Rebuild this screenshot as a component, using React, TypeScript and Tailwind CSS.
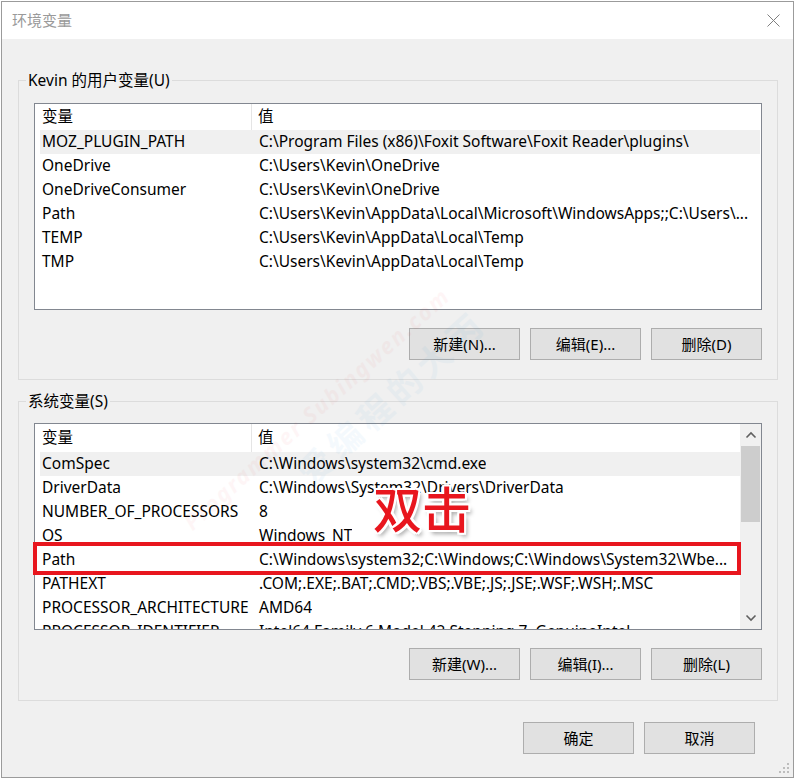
import React from "react";

const font = "font-['Noto_Sans','Noto_Sans_CJK_SC',sans-serif]";

const userVars = [
  { name: "MOZ_PLUGIN_PATH", value: "C:\\Program Files (x86)\\Foxit Software\\Foxit Reader\\plugins\\" },
  { name: "OneDrive", value: "C:\\Users\\Kevin\\OneDrive" },
  { name: "OneDriveConsumer", value: "C:\\Users\\Kevin\\OneDrive" },
  { name: "Path", value: "C:\\Users\\Kevin\\AppData\\Local\\Microsoft\\WindowsApps;;C:\\Users\\..." },
  { name: "TEMP", value: "C:\\Users\\Kevin\\AppData\\Local\\Temp" },
  { name: "TMP", value: "C:\\Users\\Kevin\\AppData\\Local\\Temp" },
];

const systemVars = [
  { name: "ComSpec", value: "C:\\Windows\\system32\\cmd.exe" },
  { name: "DriverData", value: "C:\\Windows\\System32\\Drivers\\DriverData" },
  { name: "NUMBER_OF_PROCESSORS", value: "8" },
  { name: "OS", value: "Windows_NT" },
  { name: "Path", value: "C:\\Windows\\system32;C:\\Windows;C:\\Windows\\System32\\Wbe..." },
  { name: "PATHEXT", value: ".COM;.EXE;.BAT;.CMD;.VBS;.VBE;.JS;.JSE;.WSF;.WSH;.MSC" },
  { name: "PROCESSOR_ARCHITECTURE", value: "AMD64" },
  { name: "PROCESSOR_IDENTIFIER", value: "Intel64 Family 6 Model 42 Stepping 7, GenuineIntel" },
];

type Row = { name: string; value: string };

function VarTable({ rows, headerH }: { rows: Row[]; headerH: string }) {
  return (
    <div className="min-w-0 flex-1 pl-[5px]">
      <div className={`flex ${headerH} items-center`}>
        <div className="flex h-full w-[212px] items-center border-r border-[#e5e5e5] pl-[2px]">变量</div>
        <div className="pl-[6px]">值</div>
      </div>
      {rows.map((r, i) => (
        <div
          key={r.name}
          className={`flex h-[24px] items-center whitespace-nowrap ${i === 0 ? "bg-[#f0f0f0]" : ""}`}
        >
          <div className="w-[212px] shrink-0 overflow-hidden pl-[2px]">{r.name}</div>
          <div className="overflow-hidden pl-[7px]">{r.value}</div>
        </div>
      ))}
    </div>
  );
}

function Btn({ label }: { label: string }) {
  return (
    <button className="h-[32px] w-[111px] border border-[#adadad] bg-[#e1e1e1] text-[15px] text-black">
      {label}
    </button>
  );
}

function Chevron({ down }: { down?: boolean }) {
  return (
    <svg width="12" height="8" viewBox="0 0 12 8" className={down ? "rotate-180" : ""}>
      <path d="M1.5 6.5 L6 2 L10.5 6.5" fill="none" stroke="#606060" strokeWidth="1.6" />
    </svg>
  );
}

export default function App() {
  return (
    <div className={`min-h-screen bg-white pl-[1px] pt-[1px] text-[15.5px] text-black ${font}`}>
      <div className="relative flex h-[777px] w-[793px] flex-col border border-[#9b9b9b] bg-[#f0f0f0]">
        {/* title bar */}
        <div className="flex h-[37px] items-center justify-between bg-white pl-[10px] pr-[13px]">
          <span className="text-[15px] text-[#9a9a9a]">环境变量</span>
          <svg width="13" height="13" viewBox="0 0 13 13">
            <path d="M0.5 0.5 L12.5 12.5 M12.5 0.5 L0.5 12.5" stroke="#7f7f7f" strokeWidth="1" />
          </svg>
        </div>

        {/* user variables */}
        <fieldset className="ml-[16px] mr-[15px] mt-[31px] border border-[#dcdcdc]">
          <legend className="ml-[7px] px-[2px] leading-[20px]">Kevin 的用户变量(U)</legend>
          <div className="px-[15px] pb-[19px] pt-[13px]">
            <div className="flex h-[207px] overflow-hidden border border-[#828790] bg-white pr-[1px]">
              <VarTable rows={userVars} headerH="h-[26px]" />
            </div>
            <div className="mt-[18px] flex justify-end gap-[10px]">
              <Btn label="新建(N)..." />
              <Btn label="编辑(E)..." />
              <Btn label="删除(D)" />
            </div>
          </div>
        </fieldset>

        {/* system variables */}
        <fieldset className="ml-[16px] mr-[15px] mt-[11px] border border-[#dcdcdc]">
          <legend className="ml-[7px] px-[2px] leading-[20px]">系统变量(S)</legend>
          <div className="px-[15px] pb-[20px] pt-[12px]">
            <div className="relative flex h-[207px] border border-[#828790] bg-white">
              <div className="flex min-w-0 flex-1 overflow-hidden">
                <VarTable rows={systemVars} headerH="h-[28px]" />
              </div>
              <div className="flex w-[21px] flex-col items-center bg-[#f0f0f0]">
                <div className="flex h-[22px] items-center">
                  <Chevron />
                </div>
                <div className="h-[76px] w-[19px] bg-[#cdcdcd]" />
                <div className="flex-1" />
                <div className="flex h-[22px] items-center">
                  <Chevron down />
                </div>
              </div>
              {/* annotation */}
              <div className="absolute left-[-2px] top-[118px] h-[33px] w-[708px] border-[4px] border-[#e8161e]" />
              <div className="absolute left-[338px] top-[61px] text-[49px] font-medium leading-none text-[#e8161e] [text-shadow:2px_0_0_#fff,-2px_0_0_#fff,0_2px_0_#fff,0_-2px_0_#fff,2px_2px_0_#fff,-2px_-2px_0_#fff,2px_-2px_0_#fff,-2px_2px_0_#fff,3px_4px_4px_rgba(0,0,0,0.35)]">
                双击
              </div>
            </div>
            <div className="mt-[18px] flex justify-end gap-[10px]">
              <Btn label="新建(W)..." />
              <Btn label="编辑(I)..." />
              <Btn label="删除(L)" />
            </div>
          </div>
        </fieldset>

        {/* dialog buttons */}
        <div className="mr-[38px] mt-[21px] flex justify-end gap-[10px]">
          <Btn label="确定" />
          <Btn label="取消" />
        </div>

        {/* resize grip */}
        <svg width="12" height="12" viewBox="0 0 12 12" className="absolute bottom-[2px] right-[2px]">
          <g fill="#bdbdbd">
            <rect x="8" y="0" width="2" height="2" />
            <rect x="4" y="4" width="2" height="2" />
            <rect x="8" y="4" width="2" height="2" />
            <rect x="0" y="8" width="2" height="2" />
            <rect x="4" y="8" width="2" height="2" />
            <rect x="8" y="8" width="2" height="2" />
          </g>
        </svg>

        {/* watermark */}
        <div className="pointer-events-none absolute left-[140px] top-[390px] -rotate-[42deg] text-[22px] font-bold italic tracking-[2px] text-[#e8161e] opacity-[0.035]">
          Programmer Subingwen.com
        </div>
        <div className="pointer-events-none absolute left-[270px] top-[370px] -rotate-[42deg] text-[34px] font-bold tracking-[6px] text-[#1e90d8] opacity-[0.045]">
          爱编程的大丙
        </div>
      </div>
    </div>
  );
}
